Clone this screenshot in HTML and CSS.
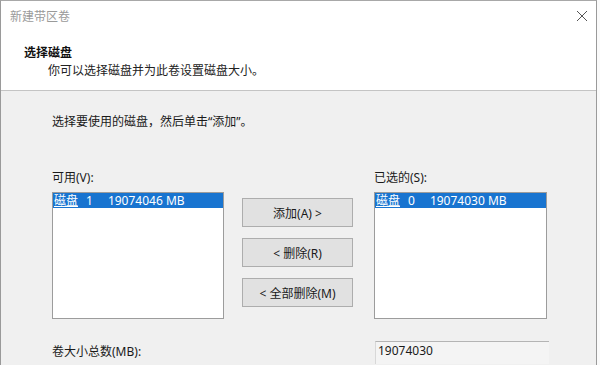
FILE: index.html
```html
<!DOCTYPE html>
<html lang="zh-CN">
<head>
    <meta charset="UTF-8">
    <title>新建带区卷</title>
    <link rel="stylesheet" href="styles.css">
</head>
<body>
    <div class="window">
        <div class="titlebar">
            <span class="title">新建带区卷</span>
            <svg class="close" width="12" height="12" viewBox="0 0 12 12">
                <path d="M1 1 L11 11 M11 1 L1 11" stroke="#555" stroke-width="1" fill="none"/>
            </svg>
        </div>
        <div class="header">
            <div class="heading">选择磁盘</div>
            <div class="subtitle">你可以选择磁盘并为此卷设置磁盘大小。</div>
        </div>
        <div class="content">
            <div class="hint">选择要使用的磁盘，然后单击“添加”。</div>
            <div class="picker">
                <div class="column">
                    <div class="label">可用(V):</div>
                    <div class="listbox">
                        <div class="item"><span class="disk">磁盘</span><span class="num">1</span><span class="size">19074046 MB</span></div>
                    </div>
                </div>
                <div class="buttons">
                    <button class="btn">添加(A) &gt;</button>
                    <button class="btn">&lt; 删除(R)</button>
                    <button class="btn">&lt; 全部删除(M)</button>
                </div>
                <div class="column right">
                    <div class="label">已选的(S):</div>
                    <div class="listbox">
                        <div class="item"><span class="disk">磁盘</span><span class="num">0</span><span class="size">19074030 MB</span></div>
                    </div>
                </div>
            </div>
            <div class="total">
                <div class="total-label">卷大小总数(MB):</div>
                <div class="total-box">19074030</div>
            </div>
        </div>
    </div>
</body>
</html>
```

FILE: styles.css
```css
body {
    margin: 0;
    background-color: #fafafa;
    font-family: "Noto Sans", "Noto Sans CJK SC", sans-serif;
    font-size: 12px;
    color: #1a1a1a;
    height: 365px;
    overflow: hidden;
}
.window {
    width: 595px;
    height: 365px;
    border-left: 1px solid #9a9a9a;
    border-right: 1px solid #9a9a9a;
    border-top: 1px solid #a8a8a8;
    background-color: #f0f0f0;
}
.titlebar {
    height: 29px;
    background-color: #fff;
    display: flex;
    align-items: center;
    justify-content: space-between;
    padding: 0 8px 0 9px;
}
.title {
    color: #9a9a9a;
    font-family: "Noto Sans CJK SC", sans-serif;
}
.header {
    background-color: #fff;
    height: 46px;
    padding: 14px 0 0 23px;
    border-bottom: 1px solid #c4c4c4;
}
.heading {
    font-weight: bold;
    line-height: 18px;
    color: #111;
}
.subtitle {
    line-height: 18px;
    margin-left: 24px;
    color: #222;
}
.content {
    padding: 22px 0 0 51px;
}
.hint {
    line-height: 18px;
}
.picker {
    display: flex;
    margin-top: 38px;
}
.column {
    width: 172px;
}
.column.right {
    width: 173px;
}
.label {
    line-height: 18px;
    margin-bottom: 5px;
}
.listbox {
    height: 125px;
    background-color: #fff;
    border: 1px solid #9c9c9c;
}
.item {
    background-color: #1874d0;
    color: #fff;
    line-height: 15px;
    height: 15px;
    padding-left: 1px;
    white-space: nowrap;
}
.disk {
    text-decoration: underline;
}
.num {
    margin-left: 8px;
}
.size {
    margin-left: 15px;
}
.buttons {
    display: flex;
    flex-direction: column;
    gap: 11px;
    margin: 29px 21px 0 18px;
}
.btn {
    width: 111px;
    height: 29px;
    background-color: #e1e1e1;
    border: 1px solid #adadad;
    font-family: inherit;
    font-size: 12px;
    color: #1a1a1a;
    padding: 0;
}
.total {
    display: flex;
    margin-top: 22px;
}
.total-label {
    width: 323px;
    line-height: 18px;
    padding-top: 2px;
}
.total-box {
    width: 171px;
    height: 22px;
    border-top: 1px solid #b4b4b4;
    border-left: 1px solid #d8d8d8;
    background-color: #f4f4f4;
    padding-left: 2px;
    line-height: 18px;
}
```
